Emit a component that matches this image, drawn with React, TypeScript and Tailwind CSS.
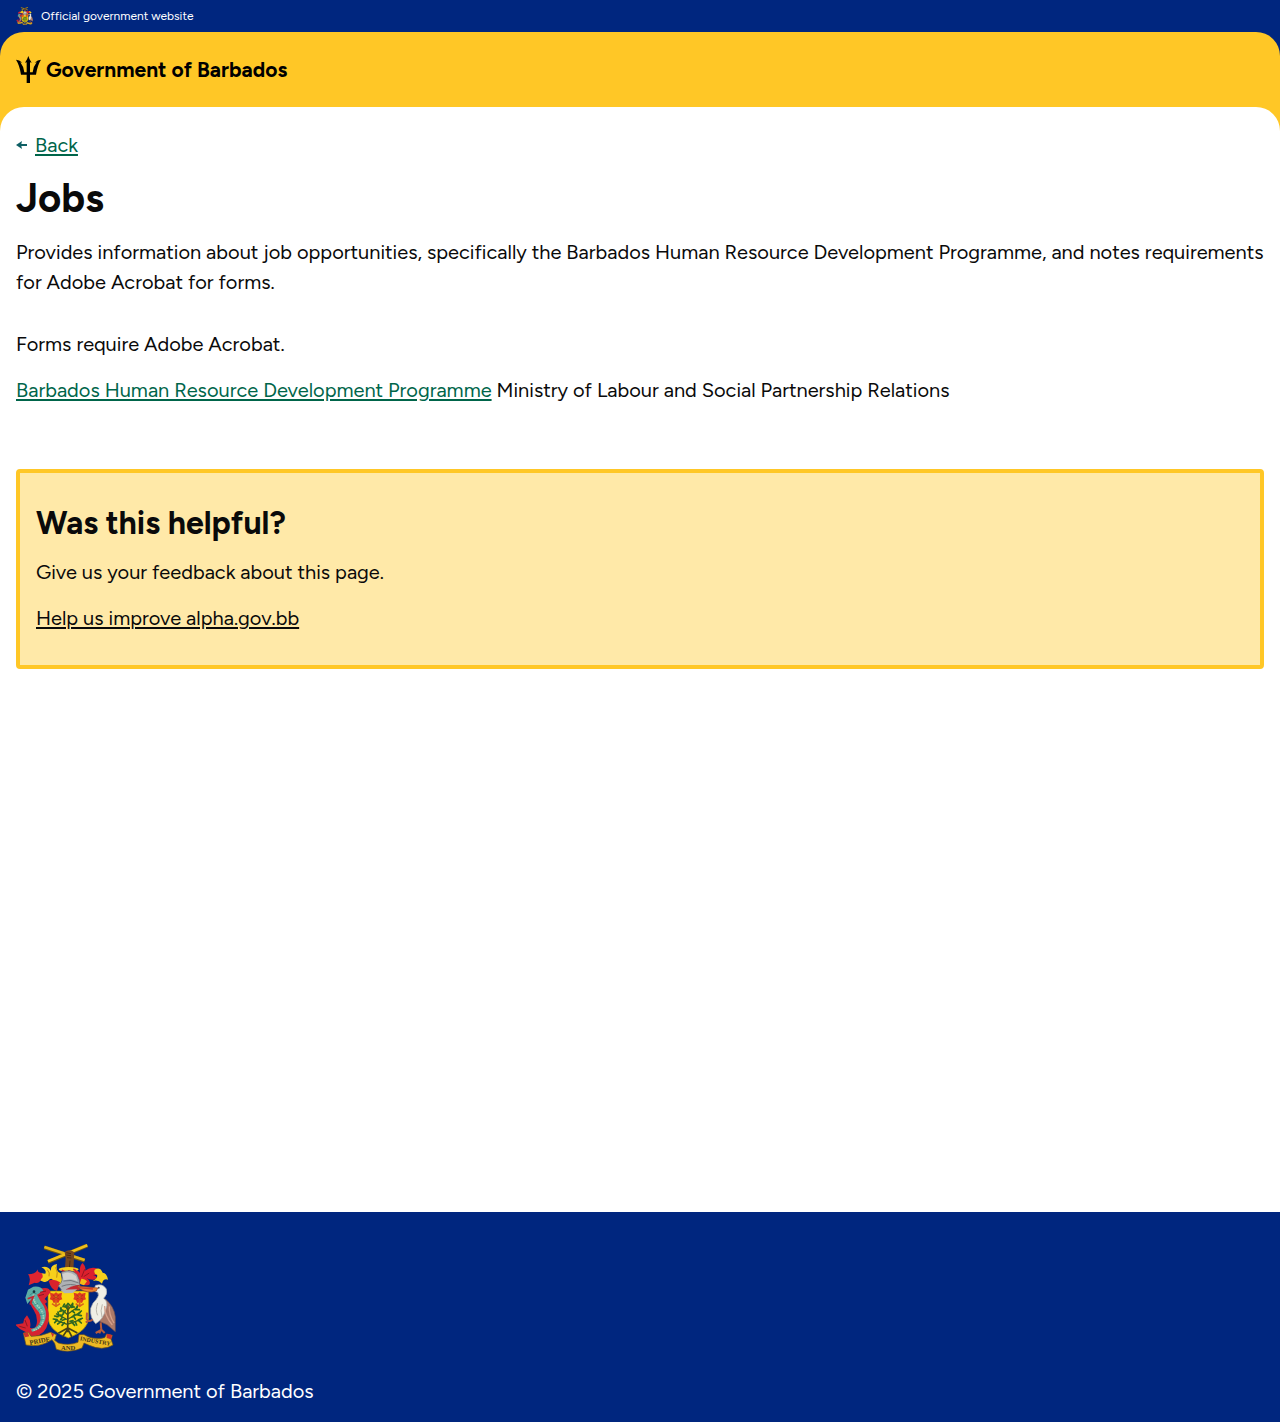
function CoatOfArms({ className }: { className: string }) {
  return (
    <svg viewBox="18 12 300 324" className={className} role="img" aria-label="Coat of arms of Barbados">
      {/* crossed canes and arm */}
      <path d="M103 22 L224 62" stroke="#6d5512" strokeWidth="12" />
      <path d="M232 16 L114 66" stroke="#6d5512" strokeWidth="12" />
      <path d="M103 21 L224 60" stroke="#e2b41a" strokeWidth="8" />
      <path d="M232 16 L114 64" stroke="#f0c01c" strokeWidth="8" />
      <path d="M164 36 Q178 25 193 37 L192 54 L190 92 L164 92 L167 58 Z" fill="#75461f" />
      <path d="M169 38 l14 3 M169 45 l14 2 M171 53 l13 1 M180 62 L178 86" stroke="#4a2911" strokeWidth="3" />
      {/* mantling */}
      <path d="M152 100 Q136 94 141 72 Q120 76 123 93 Q113 76 94 82 Q111 90 106 101 L84 98 L82 117 Q88 121 100 125 Q111 129 119 118 Q127 112 130 125 Q138 148 160 135 Z" fill="#f7d01c" />
      <path d="M83 88 Q77 103 54 103 Q64 113 56 136 L74 128 Q88 132 94 116 Q102 111 95 99 Q82 98 83 88 Z" fill="#df2530" />
      <path d="M116 122 Q132 114 150 127 L141 153 Q122 148 116 122 Z" fill="#d9222c" />
      <path d="M112 89 Q121 99 117 109 M137 82 Q145 96 140 113" stroke="#c38a13" strokeWidth="3" fill="none" />
      <path d="M190 86 Q202 89 210 99 Q207 78 218 69 Q230 83 225 92 Q241 80 257 84 L269 90 L267 104 L249 105 Q262 108 260 118 Q239 121 230 114 Q244 123 238 134 Q216 140 202 123 Q192 108 190 86 Z" fill="#dc202d" />
      <path d="M254 89 Q270 79 278 98 Q290 98 294 119 Q280 114 276 131 Q264 117 248 123 Q265 114 261 104 Q250 102 254 89 Z" fill="#f7d01c" />
      <path d="M214 116 Q224 115 231 124 L222 136 L209 131 Z" fill="#f4bd18" />
      <path d="M224 88 L215 111 M238 99 L221 110" stroke="#961420" strokeWidth="3" />
      <ellipse cx="176" cy="88" rx="30" ry="7" fill="#f6cf22" />
      <path d="M155 91 l12 5 M174 92 l12 4 M190 88 l9 4" stroke="#ce2029" strokeWidth="5" />
      {/* helmet */}
      <path d="M154 97 Q182 85 201 103 Q210 119 210 139 L191 153 L157 153 L145 137 Q162 126 154 97 Z" fill="#aeb1b4" stroke="#59606b" strokeWidth="2" />
      <path d="M157 102 Q178 90 198 108 L202 124 Q181 112 161 122 Z" fill="#d3d3cf" />
      <path d="M160 123 Q183 117 206 129 M155 139 Q182 128 207 139" fill="none" stroke="#73777d" strokeWidth="3" />
      <path d="M168 148 Q182 138 209 134 L209 150 L166 156 Z" fill="#c42831" />
      {/* shield */}
      <path d="M114 153 H236 V233 Q234 272 175 294 Q116 272 114 233 Z" fill="#f8d511" stroke="#9b7914" strokeWidth="2" />
      <path d="M151 149 L202 148 L188 159 L163 160 Z" fill="#b3b5b6" />
      {[138, 209].map((x) => (
        <g key={x}>
          <path d={`M${x - 18} 158 l12 3 l6 -4 l6 4 l12 -3 l-2 12 l3 8 l-8 3 l-4 8 l-7 -2 l-7 2 l-4 -8 l-8 -3 l3 -8 Z`} fill="#df3a1f" />
          <path d={`M${x} 181 v20 M${x - 12} 191 l12 8 l12 -8`} stroke="#d8621a" strokeWidth="5" fill="none" />
          <circle cx={x} cy="171" r="4" fill="#f0a21c" />
          <path d={`M${x - 10} 165 l20 13 M${x + 10} 165 l-20 13`} stroke="#a22e15" strokeWidth="2" />
        </g>
      ))}
      {/* fig tree */}
      <path d="M174 196 L173 277 M173 264 L145 280 M174 264 L202 279 M173 268 L158 290 M174 268 L186 291" stroke="#46421a" strokeWidth="5" fill="none" />
      <path d="M174 254 L136 240 M174 252 L214 238 M174 240 L138 221 M174 237 L212 217 M174 225 L150 205 M174 222 L203 201 M174 212 L163 192 M174 210 L188 190" stroke="#3d5a1c" strokeWidth="4" fill="none" />
      <g stroke="#2b6a22" strokeWidth="5" strokeLinecap="round">
        <path d="M174 190 l-5 8 M176 192 l7 7 M163 192 l-4 8 M163 200 l6 2 M153 203 l0 9 M159 211 l-10 3 M144 216 l2 9 M152 225 l-12 5 M134 228 l10 2 M130 237 l11 2 M142 240 l-8 8 M153 245 l-10 7 M163 248 l-7 8 M188 190 l0 10 M183 202 l10 -1 M202 198 l-4 11 M196 209 l12 0 M214 213 l-9 8 M200 224 l14 3 M191 229 l5 8 M217 235 l-12 4 M205 241 l9 8 M196 246 l4 9 M186 247 l8 9 M157 232 l-5 7 M161 220 l-6 7 M186 231 l9 -8 M187 213 l6 5 M166 212 l-6 6 M166 238 l-9 3 M180 244 l9 -2" />
      </g>
      {/* dolphin */}
      <path d="M86 148 Q118 137 122 157 L104 177 Q117 186 105 191 Q122 214 114 249 Q107 282 75 289 Q53 288 47 276 L30 267 L15 254 L40 250 Q39 238 51 226 Q65 243 60 263 Q76 270 80 252 Q84 229 71 210 Q55 190 60 158 Z" fill="#d62331" />
      <path d="M46 173 L54 149 L70 140 Q93 137 100 152 L81 164 Q90 182 101 198 Q116 226 99 253 Q87 273 66 275 L63 268 Q87 262 91 243 Q95 222 78 206 Q65 193 62 180 L52 192 Z" fill="#5cada5" />
      <path d="M71 163 Q67 181 84 199 Q107 221 98 247 Q90 266 70 271" fill="none" stroke="#a6d3bd" strokeWidth="5" strokeDasharray="5 2" />
      <path d="M59 166 l10 -8 l11 4 M62 184 l9 4 M73 195 l11 -5 M84 211 l13 -8 M89 224 l15 -3 M89 239 l14 1 M84 252 l12 5 M78 262 l6 7" stroke="#2f7d7a" strokeWidth="2" fill="none" />
      <path d="M90 157 l18 -4 M86 167 l16 -4 M45 240 l7 19 M28 259 l19 5" stroke="#8e1722" strokeWidth="3" />
      <circle cx="72" cy="155" r="4" fill="#17343d" />
      <path d="M53 176 L70 170 L60 194" fill="none" stroke="#c22631" strokeWidth="5" />
      {/* pelican */}
      <path d="M287 178 Q312 199 316 230 L316 275 L291 254 L270 245 Q260 215 270 183 Z" fill="#ab7968" stroke="#684c4c" strokeWidth="2" />
      <path d="M257 136 Q278 129 289 147 Q294 163 281 175 Q296 185 288 206 Q279 240 257 251 Q239 234 242 205 Q247 188 259 178 Q269 166 263 157 Q253 157 252 147 Z" fill="#f0efe5" stroke="#a4a8aa" strokeWidth="2" />
      <path d="M263 144 L201 138 Q219 158 246 156 L259 153 Z" fill="#e98431" stroke="#9b4422" strokeWidth="2" />
      <path d="M206 143 L249 147" stroke="#cf392e" strokeWidth="4" />
      <circle cx="266" cy="143" r="3" fill="#4b4b52" />
      <path d="M263 189 Q255 211 263 226 M277 193 Q270 212 276 232" stroke="#bcb8ae" strokeWidth="3" fill="none" />
      <path d="M284 198 Q283 226 307 255 M298 199 Q296 223 312 249" stroke="#d5a08a" strokeWidth="4" fill="none" />
      <path d="M248 238 Q237 249 230 237 L231 218 M238 242 L227 247 M272 247 L274 270 L257 279 M274 269 L284 279 M273 269 L268 280" fill="none" stroke="#b85c3b" strokeWidth="6" />
      {/* motto ribbon */}
      <path d="M40 279 L55 277 L63 289 Q92 290 121 277 L139 284 L134 301 L145 309 Q176 318 204 307 L207 284 L222 284 Q251 301 284 293 L290 282 L307 286 L303 298 L309 315 Q278 334 238 316 L222 309 L216 324 Q178 341 139 328 L134 310 L126 299 Q91 323 48 315 Z" fill="#edb924" stroke="#795713" strokeWidth="2" />
      <path d="M40 279 l13 -2 l5 12 l-13 3 Z M290 281 l16 4 l-3 13 l-13 -4 Z M122 277 l10 6 l-4 9 Z" fill="#cf302c" />
      <g fill="#423719" fontFamily="Liberation Serif, serif" fontSize="20" fontWeight="700">
        <text transform="translate(60 315) rotate(-11)">PRIDE</text>
        <text x="153" y="329">AND</text>
        <text transform="translate(209 301) rotate(10)" fontSize="18">INDUSTRY</text>
      </g>
    </svg>
  );
}

function Trident() {
  return (
    <svg viewBox="0 0 75 81" className="h-[27px] w-[25px] shrink-0" aria-hidden="true">
      <path d="M37 0 Q40 11 47 20 L42 19 V49 H50 Q51 33 62 19 L56 20 Q65 11 75 11 Q64 28 60 56 H42 V81 H32 V56 H15 Q11 28 0 11 Q10 11 19 20 L13 19 Q24 33 25 49 H32 V19 L27 20 Q34 11 37 0 Z" />
    </svg>
  );
}

const link = "underline decoration-2 underline-offset-2";

export default function App() {
  return (
    <div className="flex min-h-screen flex-col bg-white font-['Figtree','Inter',sans-serif] text-xl leading-[30px] text-[#0a0a0a]">
      <div className="bg-[#00267f]">
        <div className="flex h-8 items-center gap-2 px-4 text-xs text-white">
          <CoatOfArms className="h-[18px] w-[17px]" />
          <span>Official government website</span>
        </div>
        <header className="rounded-t-3xl bg-[#ffc726] px-4 py-6 text-black">
          <a href="#" className="flex w-fit items-center gap-[5px] text-[21px] leading-[27px] font-bold">
            <Trident />
            Government of Barbados
          </a>
        </header>
      </div>

      <div className="flex flex-1 flex-col bg-[#ffc726]">
        <main className="flex-1 rounded-t-3xl bg-white px-4 pt-[23px] pb-16">
          <a href="#" className="flex w-fit items-center gap-2 text-[#00654a]">
            <svg viewBox="0 0 33 24" className="h-2 w-[11px]" fill="#0e5f64" aria-hidden="true">
              <path d="M0 12 L18 0 L16 9 H33 V15 H16 L18 24 Z" />
            </svg>
            <span className={link}>Back</span>
          </a>
          <h1 className="mt-4 text-[40px] leading-[45px] font-bold">Jobs</h1>
          <p className="mt-4">
            Provides information about job opportunities, specifically the Barbados Human Resource Development Programme, and notes requirements for Adobe Acrobat for forms.
          </p>
          <p className="mt-8">Forms require Adobe Acrobat.</p>
          <p className="mt-4">
            <a href="#" className={`${link} text-[#00654a]`}>Barbados Human Resource Development Programme</a> Ministry of Labour and Social Partnership Relations
          </p>
          <section className="mt-16 rounded-sm border-4 border-[#ffc726] bg-[#ffe9a8] px-4 py-8">
            <h2 className="text-[32px] leading-[36px] font-bold">Was this helpful?</h2>
            <p className="mt-4">Give us your feedback about this page.</p>
            <p className="mt-4">
              <a href="#" className={link}>Help us improve alpha.gov.bb</a>
            </p>
          </section>
        </main>
      </div>

      <footer className="bg-[#00267f] px-4 pt-8 pb-4 text-white">
        <CoatOfArms className="h-[108px] w-[100px]" />
        <p className="mt-6">© 2025 Government of Barbados</p>
      </footer>
    </div>
  );
}
